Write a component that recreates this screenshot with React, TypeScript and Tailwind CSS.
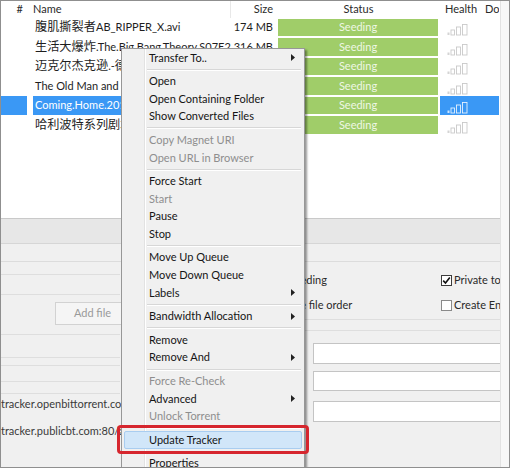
import React from 'react';

type Row = { name: string; size: string; selected?: boolean };

type MenuItem = { label?: string; disabled?: boolean; sub?: boolean; sep?: boolean; hot?: boolean };

const rows: Row[] = [
  { name: '腹肌撕裂者AB_RIPPER_X.avi', size: '174 MB' },
  { name: '生活大爆炸.The.Big.Bang.Theory.S07E21', size: '316 MB' },
  { name: '迈克尔杰克逊.-德国慕尼黑演唱会.mkv', size: '1.4 GB' },
  { name: 'The Old Man and the Sea.avi', size: '702 MB' },
  { name: 'Coming.Home.2014.1080p.BluRay.x264.mkv', size: '2.1 GB', selected: true },
  { name: '哈利波特系列剧场版全集.mkv', size: '8.3 GB' },
];

const menu: MenuItem[] = [
  { label: 'Transfer To..', sub: true },
  { sep: true },
  { label: 'Open' },
  { label: 'Open Containing Folder' },
  { label: 'Show Converted Files' },
  { sep: true },
  { label: 'Copy Magnet URI', disabled: true },
  { label: 'Open URL in Browser', disabled: true },
  { sep: true },
  { label: 'Force Start' },
  { label: 'Start', disabled: true },
  { label: 'Pause' },
  { label: 'Stop' },
  { sep: true },
  { label: 'Move Up Queue' },
  { label: 'Move Down Queue' },
  { label: 'Labels', sub: true },
  { sep: true },
  { label: 'Bandwidth Allocation', sub: true },
  { sep: true },
  { label: 'Remove' },
  { label: 'Remove And', sub: true },
  { sep: true },
  { label: 'Force Re-Check', disabled: true },
  { label: 'Advanced', sub: true },
  { label: 'Unlock Torrent', disabled: true },
  { sep: true },
  { label: 'Update Tracker', hot: true },
  { sep: true },
  { label: 'Properties' },
];

// CJK runs get a slightly larger size, like the YaHei fallback in the original
const renderName = (s: string) =>
  s
    .split(/([\u4e00-\u9fff]+)/)
    .filter(Boolean)
    .map((part, i) =>
      /[\u4e00-\u9fff]/.test(part) ? (
        <span key={i} className="text-[12.2px]">{part}</span>
      ) : (
        <span key={i}>{part}</span>
      )
    );

const Health = ({ active }: { active?: boolean }) => {
  const fill = active ? '#cfe6ff' : '#d4d4d4';
  const stroke = active ? '#e4f1ff' : '#c9c9c9';
  return (
    <svg width="22" height="12" viewBox="0 0 22 12">
      <rect x="0.5" y="8.5" width="2" height="2.5" fill={fill} />
      <rect x="4" y="6" width="3.5" height="5" fill="none" stroke={stroke} strokeWidth="0.9" />
      <rect x="9.5" y="3" width="4" height="8" fill="none" stroke={stroke} strokeWidth="0.9" />
      <rect x="15.5" y="0.5" width="4.5" height="10.5" fill="none" stroke={stroke} strokeWidth="0.9" />
    </svg>
  );
};

const Check = ({ checked }: { checked?: boolean }) => (
  <div
    className={`w-[11px] h-[11px] shrink-0 bg-white border flex items-center justify-center ${
      checked ? 'border-[#3c3c3c]' : 'border-[#8a8a8a]'
    }`}
  >
    {checked && (
      <svg width="9" height="9" viewBox="0 0 9 9">
        <path d="M1.2 4.6 L3.5 7 L7.8 1.6" fill="none" stroke="#111" strokeWidth="1.6" />
      </svg>
    )}
  </div>
);

const ContextMenu = () => (
  <div className="absolute left-[120px] top-[47px] w-[184px] border border-[#979797] bg-[linear-gradient(to_right,#f0f0f0_22px,#e2e2e2_22px,#e2e2e2_23px,#ffffff_23px,#ffffff_24px,#f0f0f0_24px)] shadow-[2px_2px_2px_rgba(0,0,0,0.4)] text-[11px]">
    {menu.map((item, i) =>
      item.sep ? (
        <div key={i} className="h-[6px] ml-[25px] mr-[3px] flex flex-col justify-center">
          <div className="h-px bg-[#d7d7d7]" />
          <div className="h-px bg-white" />
        </div>
      ) : (
        <div
          key={i}
          className={`h-[17.6px] mx-[2px] pl-[24px] pr-[6px] flex items-center justify-between border rounded-[2px] ${
            item.hot ? 'bg-[#d1e6f9] border-[#a9cdf0]' : 'border-transparent'
          } ${item.disabled ? 'text-[#8e8e8e]' : 'text-[#151515]'}`}
        >
          <span className="whitespace-nowrap">{item.label}</span>
          {item.sub && (
            <svg width="4" height="7" viewBox="0 0 4 7">
              <path d="M0 0 L4 3.5 L0 7 Z" fill="#222" />
            </svg>
          )}
        </div>
      )
    )}
  </div>
);

export default function App() {
  return (
    <div className="w-[510px] h-[468px] relative overflow-hidden flex bg-[#f0f0f0] border border-[#8f8f8f] font-['Lato','Noto_Sans_CJK_SC',sans-serif] text-[11px] text-[#222]">
      <div className="w-[499px] shrink-0 flex flex-col">
        {/* torrent list */}
        <div className="h-[218px] bg-white border-b border-[#c9c9c9] flex flex-col">
          <div className="h-[16.5px] flex items-center text-[#2a2a2a]">
            <div className="w-[26px] shrink-0 text-right pr-[4px]">#</div>
            <div className="w-[204px] shrink-0 pl-[6px] border-r border-[#e8e8e8]">Name</div>
            <div className="w-[46px] shrink-0 text-right pr-[4px] relative">
              <svg className="absolute left-[20px] -top-[6px]" width="6" height="4" viewBox="0 0 6 4">
                <path d="M0.5 3.5 L3 1 L5.5 3.5" fill="none" stroke="#999" strokeWidth="0.8" />
              </svg>
              Size
            </div>
            <div className="w-[163px] shrink-0 text-center">Status</div>
            <div className="w-[40px] shrink-0 pl-[5px]">Health</div>
            <div className="w-[19px] shrink-0 pl-[5px] overflow-hidden whitespace-nowrap">Do</div>
          </div>
          {rows.map((r, i) => (
            <div key={i} className="h-[19.6px] flex">
              <div className={`w-[26px] shrink-0 ${r.selected ? 'bg-[#3a98f5]' : ''}`} />
              <div className="w-[204px] shrink-0 pl-[6px] flex">
                <div
                  className={`flex-1 min-w-0 pl-[2px] pr-[6px] flex items-center overflow-hidden whitespace-nowrap ${
                    r.selected ? 'bg-[#3a98f5] text-white' : 'text-[#1e1e1e]'
                  }`}
                >
                  {renderName(r.name)}
                </div>
              </div>
              <div
                className={`w-[46px] shrink-0 pr-[4px] flex items-center justify-end ${
                  r.selected ? 'bg-[#3a98f5] text-white' : 'text-[#1e1e1e]'
                }`}
              >
                {r.size}
              </div>
              <div className="w-[163px] shrink-0 py-[1px] pl-[1px] pr-[2px]">
                <div className="h-full bg-[#a0cd69] flex items-center justify-center text-[#eef7e4]">Seeding</div>
              </div>
              <div className={`w-[40px] shrink-0 pl-[7px] pb-[1px] flex items-end ${r.selected ? 'bg-[#3a98f5]' : ''}`}>
                <Health active={r.selected} />
              </div>
              <div className={`w-[19px] shrink-0 ${r.selected ? 'bg-[#3a98f5]' : ''}`} />
            </div>
          ))}
        </div>

        {/* lower panel */}
        <div className="flex-1 flex flex-col">
          <div className="h-[25px] bg-[#e7e7e7] border-b border-[#d6d6d6]" />
          <div className="h-[18px] border-b border-[#dcdcdc]" />
          <div className="flex-1 flex">
            <div className="w-[119px] shrink-0 flex flex-col">
              <div className="h-[13px] border-b border-[#dedede]" />
              <div className="h-[20px] border-b border-[#dedede]" />
              <div className="pt-[7px]">
                <div className="ml-[54px] w-[75px] h-[23px] border border-[#d2d2d2] bg-[#f5f5f5] flex items-center justify-center text-[#9a9a9a]">
                  Add file
                </div>
              </div>
              <div className="h-[10px] border-b border-[#dedede]" />
              <div className="h-[23px] border-b border-[#dedede]" />
              <div className="h-[8px] border-b border-[#dedede]" />
              <div className="h-[16px] border-b border-[#dedede]" />
              <div className="h-[12px] border-b border-[#dedede]" />
              <div className="flex flex-col gap-[7px] text-[#3a3a3a] whitespace-nowrap">
                <div className="h-[20px] leading-[20px]">tracker.openbittorrent.com:80/announce</div>
                <div className="h-[20px] leading-[20px]">tracker.publicbt.com:80/announce</div>
              </div>
            </div>
            <div className="w-[130px] shrink-0" />
            <div className="flex-1 min-w-0 flex flex-col">
              <div className="pt-[8px] flex flex-col gap-[5px] text-[#2a2a2a] whitespace-nowrap">
                <div className="h-[20px] flex items-center">
                  <div className="w-[191px] shrink-0 flex items-center gap-[3px]">
                    <Check checked />
                    <span>Start seeding</span>
                  </div>
                  <div className="min-w-0 flex items-center gap-[2px] overflow-hidden">
                    <Check checked />
                    <span>Private torrent</span>
                  </div>
                </div>
                <div className="h-[20px] flex items-center">
                  <div className="w-[191px] shrink-0 flex items-center gap-[3px]">
                    <Check />
                    <span>Preserve file order</span>
                  </div>
                  <div className="min-w-0 flex items-center gap-[2px] overflow-hidden">
                    <Check />
                    <span>Create Encrypted</span>
                  </div>
                </div>
              </div>
              <div className="h-[5px] border-b border-[#dedede]" />
              <div className="h-[11px] border-b border-[#dedede]" />
              <div className="ml-[63px] mt-[12px] h-[21px] bg-white border border-r-0 border-[#c4c4c4]" />
              <div className="ml-[63px] mt-[7px] h-[20px] bg-white border border-r-0 border-[#c4c4c4]" />
              <div className="ml-[63px] mt-[10px] h-[21px] bg-white border border-r-0 border-[#c4c4c4]" />
            </div>
          </div>
        </div>
      </div>
      <div className="flex-1 bg-[#f7f7f7] border-l border-[#e2e2e2]" />

      <ContextMenu />

      {/* red annotation box around Update Tracker */}
      <div className="absolute left-[116px] top-[424px] w-[192px] h-[29px] border-[3px] border-[#d6262e] rounded-[4px]" />
    </div>
  );
}
